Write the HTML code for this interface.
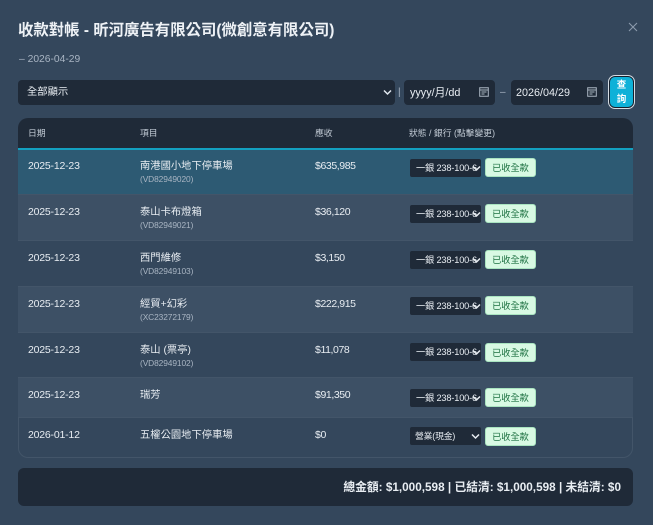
<!DOCTYPE html>
<html lang="zh-Hant">
<head>
<meta charset="utf-8">
<title>收款對帳</title>
<style>
html,body{margin:0;padding:0;width:653px;height:525px;overflow:hidden;background:#34475c}
body{position:relative;font-family:"Liberation Sans","Noto Sans CJK TC",sans-serif;color:#e2e8f0}
.a{position:absolute;white-space:nowrap}
.ctl{position:absolute;background:#1f2a38;border-radius:4px;height:25px;top:80px}
.row{position:absolute;left:18px;width:615px;box-sizing:border-box;border-bottom:1px solid #435569}
.d{position:absolute;left:10px;top:10px;font-size:10.5px;line-height:14px;letter-spacing:-.2px;color:#e8edf2}
.n{position:absolute;left:122px;top:11px;font-size:10.3px;line-height:14px;color:#e8edf2}
.c{position:absolute;left:122px;top:24px;font-size:8.4px;line-height:12px;color:#a9b5c3;letter-spacing:-.1px}
.m{position:absolute;left:297px;top:10px;font-size:10.5px;line-height:14px;letter-spacing:-.4px;color:#e8edf2}
.s{position:absolute;left:392px;top:10px;width:71px;height:18px;background:#1f2a38;border-radius:2px;overflow:hidden;font-size:9.2px;letter-spacing:-.15px;line-height:19px;color:#e8edf2;text-indent:6px;white-space:nowrap}
.s svg{position:absolute;left:62px;top:6px;text-indent:0}
.b{position:absolute;left:467px;top:9px;width:51px;height:19px;box-sizing:border-box;background:#d8f9e3;border:1px solid #a9e4c0;border-radius:3px;font-size:9.2px;line-height:18px;text-align:center;color:#1c7040}
.th{position:absolute;top:127px;font-size:8.8px;line-height:13px;color:#c3ccd6}
.r1 .d,.r1 .m{top:9px}
.r1 .n{top:10px}
.r1 .c{top:23px}
.r1 .s{top:9px}
.r1 .b{top:8px}
</style>
</head>
<body>
<div class="a" style="left:18px;top:21px;font-size:15.4px;line-height:20px;font-weight:700;color:#eef2f6">收款對帳 - 昕河廣告有限公司(微創意有限公司)</div>
<div class="a" style="left:19px;top:53px;font-size:10.3px;line-height:14px;color:#a9b5c3">– 2026-04-29</div>
<svg class="a" style="left:628px;top:22px" width="10" height="10" viewBox="0 0 10 10"><path d="M1 1l8 8M9 1l-8 8" stroke="#8c9bad" stroke-width="1.100" fill="none"/></svg>

<div class="ctl" style="left:18px;width:377px"><span class="a" style="left:9px;top:5px;font-size:10.3px;line-height:16px;color:#e8edf2">全部顯示</span>
<svg class="a" style="left:365px;top:9px" width="9" height="7" viewBox="0 0 9 7"><path d="M1 1.500l3.500 3.500 3.500-3.500" stroke="#e2e8f0" stroke-width="1.500" fill="none"/></svg></div>
<div class="a" style="left:398px;top:86px;font-size:10px;line-height:14px;color:#a9b5c3">|</div>
<div class="ctl" style="left:404px;width:91px"><span class="a" style="left:6px;top:5px;font-size:10.8px;line-height:16px;color:#e8edf2">yyyy/月/dd</span>
<svg class="a" style="left:75px;top:7px" width="10" height="10" viewBox="0 0 10 10"><path d="M.7.700h8.600v8.600h-8.600zM.7 3h8.600M2.500 5h5M2.500 7h3" stroke="#aab5c1" stroke-width="1" fill="none"/></svg></div>
<div class="a" style="left:500px;top:86px;font-size:10px;line-height:14px;color:#a9b5c3">–</div>
<div class="ctl" style="left:511px;width:92px"><span class="a" style="left:5px;top:5px;font-size:10.8px;line-height:16px;color:#e8edf2">2026/04/29</span>
<svg class="a" style="left:76px;top:7px" width="10" height="10" viewBox="0 0 10 10"><path d="M.7.700h8.600v8.600h-8.600zM.7 3h8.600M2.500 5h5M2.500 7h3" stroke="#aab5c1" stroke-width="1" fill="none"/></svg></div>
<div class="a" style="left:609px;top:76px;width:25px;height:32px;box-sizing:border-box;background:#0eb1d8;border:1px solid #16202c;outline:1px solid #d5dce3;border-radius:6px;color:#fff;font-size:9.5px;font-weight:700;line-height:14px;text-align:center;padding-top:2px;white-space:normal">查<br>詢</div>

<div class="a" style="left:18px;top:118px;width:615px;height:340px;border-radius:10px;overflow:hidden;background:#34475c">
  <div class="a" style="left:0;top:0;width:615px;height:30px;background:#1f2a38"></div>
  <div class="a" style="left:0;top:30px;width:615px;height:2px;background:#13a0c0"></div>
</div>
<div class="th" style="left:28px">日期</div>
<div class="th" style="left:140px">項目</div>
<div class="th" style="left:315px">應收</div>
<div class="th" style="left:409px">狀態 / 銀行 (點擊變更)</div>

<div class="row r1" style="top:150px;height:45px;background:#2d5a73"><div class="d">2025-12-23</div><div class="n">南港國小地下停車場</div><div class="c">(VD82949020)</div><div class="m">$635,985</div><div class="s">一銀 238-100-6<svg width="9" height="7" viewBox="0 0 9 7"><path d="M1 1.500l3.500 3.500 3.500-3.500" stroke="#e8edf2" stroke-width="1.500" fill="none"/></svg></div><div class="b">已收全款</div></div>
<div class="row" style="top:195px;height:46px;background:#3d5065"><div class="d">2025-12-23</div><div class="n">泰山卡布燈箱</div><div class="c">(VD82949021)</div><div class="m">$36,120</div><div class="s">一銀 238-100-6<svg width="9" height="7" viewBox="0 0 9 7"><path d="M1 1.500l3.500 3.500 3.500-3.500" stroke="#e8edf2" stroke-width="1.500" fill="none"/></svg></div><div class="b">已收全款</div></div>
<div class="row" style="top:241px;height:46px;background:#34475c"><div class="d">2025-12-23</div><div class="n">西門維修</div><div class="c">(VD82949103)</div><div class="m">$3,150</div><div class="s">一銀 238-100-6<svg width="9" height="7" viewBox="0 0 9 7"><path d="M1 1.500l3.500 3.500 3.500-3.500" stroke="#e8edf2" stroke-width="1.500" fill="none"/></svg></div><div class="b">已收全款</div></div>
<div class="row" style="top:287px;height:46px;background:#3d5065"><div class="d">2025-12-23</div><div class="n">經貿+幻彩</div><div class="c">(XC23272179)</div><div class="m">$222,915</div><div class="s">一銀 238-100-6<svg width="9" height="7" viewBox="0 0 9 7"><path d="M1 1.500l3.500 3.500 3.500-3.500" stroke="#e8edf2" stroke-width="1.500" fill="none"/></svg></div><div class="b">已收全款</div></div>
<div class="row" style="top:333px;height:45px;background:#34475c"><div class="d">2025-12-23</div><div class="n">泰山 (票亭)</div><div class="c">(VD82949102)</div><div class="m">$11,078</div><div class="s">一銀 238-100-6<svg width="9" height="7" viewBox="0 0 9 7"><path d="M1 1.500l3.500 3.500 3.500-3.500" stroke="#e8edf2" stroke-width="1.500" fill="none"/></svg></div><div class="b" style="top:10px">已收全款</div></div>
<div class="row" style="top:378px;height:40px;background:#3d5065"><div class="d">2025-12-23</div><div class="n">瑞芳</div><div class="m">$91,350</div><div class="s" style="top:11px">一銀 238-100-6<svg width="9" height="7" viewBox="0 0 9 7"><path d="M1 1.500l3.500 3.500 3.500-3.500" stroke="#e8edf2" stroke-width="1.500" fill="none"/></svg></div><div class="b" style="top:10px">已收全款</div></div>
<div class="row" style="top:418px;height:40px;background:#34475c;border-radius:0 0 10px 10px;border:1px solid #435569;border-top:0"><div class="d" style="left:9px">2026-01-12</div><div class="n" style="left:121px">五權公園地下停車場</div><div class="m" style="left:296px">$0</div><div class="s" style="left:391px;top:9px;text-indent:5px;font-size:8.8px">營業(現金)<svg style="left:61px" width="9" height="7" viewBox="0 0 9 7"><path d="M1 1.500l3.500 3.500 3.500-3.500" stroke="#e8edf2" stroke-width="1.500" fill="none"/></svg></div><div class="b" style="left:466px;top:9px">已收全款</div></div>

<div class="a" style="left:18px;top:468px;width:615px;height:38px;background:#1f2a38;border-radius:6px"></div>
<div class="a" style="right:32px;top:480px;font-size:11.75px;line-height:15px;font-weight:700;color:#e8edf2">總金額: $1,000,598 | 已結清: $1,000,598 | 未結清: $0</div>
</body>
</html>
